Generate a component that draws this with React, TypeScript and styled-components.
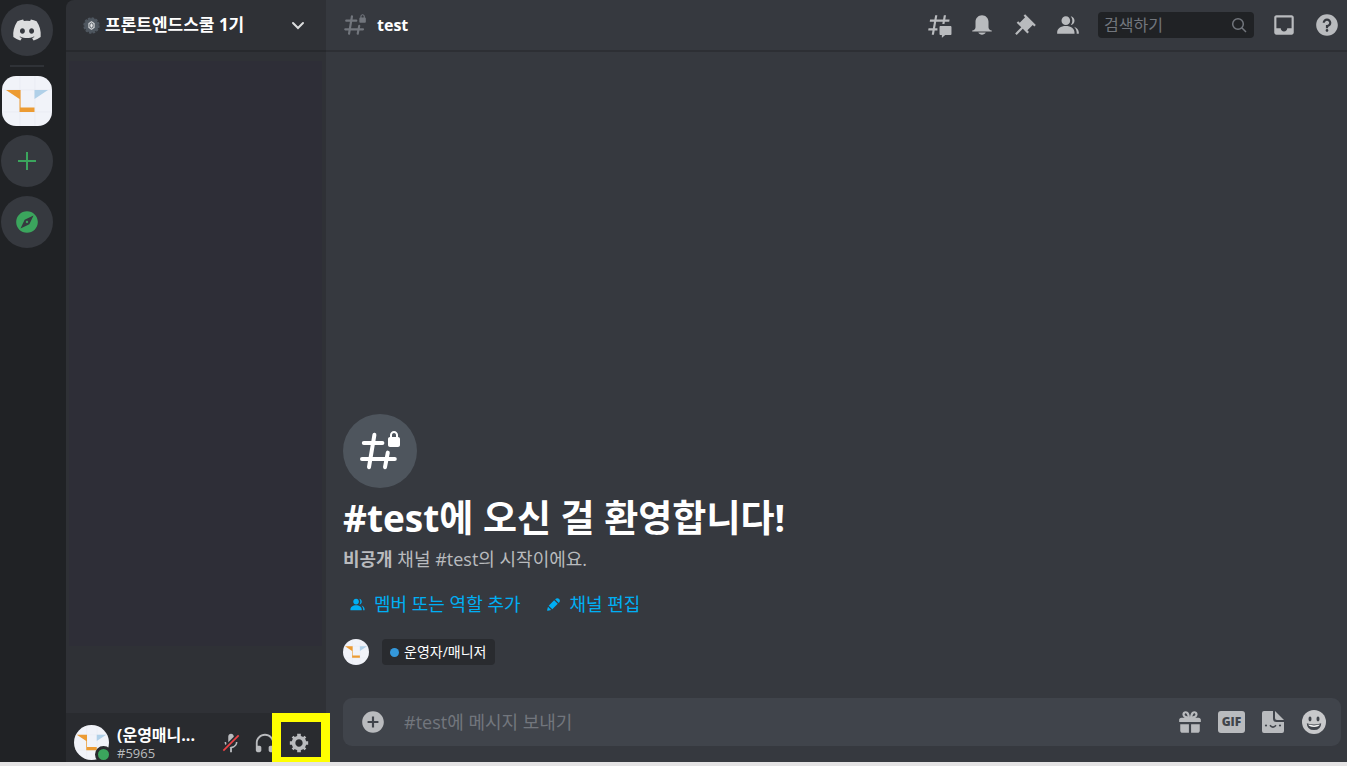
import React from "react";
import styled, { createGlobalStyle } from "styled-components";
import { FaDiscord } from "react-icons/fa6";

const GlobalStyle = createGlobalStyle`
  *, *::before, *::after { box-sizing: border-box; }
  body {
    margin: 0;
    background: #e4e3e4;
    color: #dcddde;
    font-family: "Open Sans", "Noto Sans CJK KR", sans-serif;
  }
  button { padding: 0; border: 0; background: none; color: inherit; font: inherit; cursor: pointer; }
  h1, h2, p { margin: 0; }
  svg { display: block; flex: none; }
`;

const Shell = styled.div`
  display: grid;
  grid-template-columns: 66px 260px minmax(0, 1fr);
  height: calc(100vh - 4px);
  background: #202225;
`;

/* Server rail */
const Rail = styled.nav`
  display: flex;
  flex-direction: column;
  align-items: center;
  gap: 9px;
  width: 53px;
  padding-top: 4px;
`;
const RailButton = styled.button<{ $green?: boolean }>`
  display: grid;
  place-items: center;
  width: 52px;
  height: 52px;
  border-radius: 50%;
  background: #36393f;
  color: ${(p) => (p.$green ? "#3ba55d" : "#dcddde")};
`;
const RailDivider = styled.hr`
  width: 34px;
  height: 2px;
  margin: 0;
  border: 0;
  background: #2f3237;
`;
const ServerButton = styled.button`
  width: 50px;
  height: 50px;
  border-radius: 14px;
  overflow: hidden;
`;

/* Channel sidebar */
const Sidebar = styled.aside`
  display: flex;
  flex-direction: column;
  min-width: 0;
  border-top-left-radius: 8px;
  background: #2f3136;
`;
const ServerHeader = styled.button`
  display: flex;
  align-items: center;
  gap: 5px;
  height: 52px;
  padding: 0 18px 0 17px;
  border-bottom: 2px solid #27292d;
  color: #fff;
  text-align: left;
`;
const ServerName = styled.span`
  flex: 1;
  font-size: 17px;
  font-weight: 700;
  line-height: 20px;
`;
const ChannelArea = styled.div`
  flex: 1;
  margin: 9px 4px 67px 3px;
  background: #2e2e37;
`;
const UserPanel = styled.footer`
  display: flex;
  align-items: center;
  height: 49px;
  padding: 10px 10px 0 8px;
  background: #292b2f;
`;
const AvatarHolder = styled.div`
  position: relative;
  width: 35px;
  height: 35px;
`;
const Avatar = styled.div<{ $size: number }>`
  width: ${(p) => p.$size}px;
  height: ${(p) => p.$size}px;
  border-radius: 50%;
  overflow: hidden;
`;
const Status = styled.span`
  position: absolute;
  right: -3px;
  bottom: -3px;
  width: 17px;
  height: 17px;
  border: 3px solid #292b2f;
  border-radius: 50%;
  background: #3ba55d;
`;
const UserText = styled.div`
  flex: 1;
  min-width: 0;
  padding-left: 8px;
`;
const UserName = styled.div`
  color: #fff;
  font-size: 16px;
  font-weight: 700;
  line-height: 20px;
  white-space: nowrap;
`;
const UserTag = styled.div`
  color: #b9bbbe;
  font-size: 13px;
  line-height: 16px;
`;
const PanelButton = styled.button`
  position: relative;
  display: grid;
  place-items: center;
  width: 34px;
  height: 34px;
  color: #b9bbbe;
`;
const Highlight = styled.span`
  position: absolute;
  top: -13px;
  left: -10px;
  width: 58px;
  height: 53px;
  border: 9px solid #ff0;
  z-index: 2;
  pointer-events: none;
`;

/* Chat column */
const Main = styled.main`
  display: flex;
  flex-direction: column;
  min-width: 0;
  background: #36393f;
`;
const TopBar = styled.header`
  display: flex;
  align-items: center;
  gap: 17px;
  height: 52px;
  padding: 0 7px 0 16px;
  border-bottom: 2px solid #2d2f34;
  color: #b9bbbe;
`;
const ChannelTitle = styled.h1`
  display: flex;
  flex: 1;
  align-items: center;
  gap: 9px;
  color: #fff;
  font-size: 16px;
  font-weight: 700;
  line-height: 20px;
  svg { color: #72767d; }
`;
const IconButton = styled.button`
  display: grid;
  place-items: center;
  width: 26px;
  height: 26px;
  color: #b9bbbe;
`;
const SearchBox = styled.label`
  display: flex;
  align-items: center;
  width: 156px;
  height: 26px;
  padding: 0 6px;
  border-radius: 4px;
  background: #202225;
  color: #72767d;
`;
const SearchInput = styled.input`
  flex: 1;
  min-width: 0;
  padding: 0;
  border: 0;
  outline: 0;
  background: none;
  color: #dcddde;
  font: 16px/20px "Open Sans", "Noto Sans CJK KR", sans-serif;
  &::placeholder { color: #72767d; opacity: 1; }
`;
const Welcome = styled.section`
  display: flex;
  flex: 1;
  flex-direction: column;
  align-items: flex-start;
  justify-content: flex-end;
  padding: 0 17px 33px;
`;
const ChannelBadge = styled.div`
  display: grid;
  place-items: center;
  width: 74px;
  height: 74px;
  border-radius: 50%;
  background: #4e555d;
  color: #fff;
`;
const WelcomeTitle = styled.h2`
  margin-top: 8px;
  color: #fff;
  font-size: 37px;
  font-weight: 700;
  line-height: 44px;
`;
const WelcomeText = styled.p`
  margin-top: 8px;
  color: #b9bbbe;
  font-size: 18px;
  line-height: 22px;
`;
const Actions = styled.div`
  display: flex;
  gap: 24px;
  margin: 23px 0 24px 6px;
`;
const ActionButton = styled.button`
  display: flex;
  align-items: center;
  gap: 8px;
  color: #00aff4;
  font-size: 18px;
  line-height: 22px;
`;
const RoleRow = styled.div`
  display: flex;
  align-items: center;
  gap: 13px;
`;
const Role = styled.span`
  display: flex;
  align-items: center;
  gap: 5px;
  height: 26px;
  padding: 0 9px 0 8px;
  border-radius: 4px;
  background: #292b2f;
  color: #fff;
  font-size: 14px;
  line-height: 20px;
  &::before {
    content: "";
    width: 9px;
    height: 9px;
    border-radius: 50%;
    background: #3498db;
  }
`;
const Composer = styled.form`
  display: flex;
  align-items: center;
  gap: 15px;
  height: 48px;
  margin: 0 6px 16px 17px;
  padding: 0 14px 0 17px;
  border-radius: 9px;
  background: #40444b;
`;
const MessageInput = styled.input`
  flex: 1;
  min-width: 0;
  padding: 0 0 0 3px;
  border: 0;
  outline: 0;
  background: none;
  color: #dcddde;
  font: 18px/22px "Open Sans", "Noto Sans CJK KR", sans-serif;
  &::placeholder { color: #72767d; opacity: 1; }
`;
const GifButton = styled.button`
  width: 27px;
  height: 22px;
  border-radius: 3px;
  background: #b9bbbe;
  color: #40444b;
  font-size: 12px;
  font-weight: 800;
  line-height: 22px;
`;

function Icon({ size, children }: { size: number; children: React.ReactNode }) {
  return (
    <svg width={size} height={size} viewBox="0 0 24 24" fill="currentColor" fillRule="evenodd" aria-hidden="true">
      {children}
    </svg>
  );
}

function LockedHash({ size }: { size: number }) {
  return (
    <Icon size={size}>
      <path
        d="M9.2 3.9 6.5 20.1M3.9 8H13.2M3 16H19.4M15.9 12.8 14.5 20.1"
        fill="none"
        stroke="currentColor"
        strokeWidth="2"
        strokeLinecap="round"
      />
      <path d="M21.025 5V4C21.025 2.88 20.05 2 19 2C17.95 2 17 2.88 17 4V5C16.448 5 16 5.448 16 6V9C16 9.552 16.448 10 17 10H21C21.552 10 22 9.552 22 9V5.975C22 5.437 21.564 5 21.025 5ZM20 5H18V4C18 3.429 18.467 3 19 3C19.533 3 20 3.429 20 4V5Z" />
    </Icon>
  );
}

function People({ size }: { size: number }) {
  return (
    <Icon size={size}>
      <path d="M14 8.006C14 10.211 12.206 12.006 10 12.006C7.795 12.006 6 10.211 6 8.006C6 5.801 7.794 4.006 10 4.006C12.206 4.006 14 5.801 14 8.006ZM2 19.006C2 15.473 5.29 13.006 10 13.006C14.711 13.006 18 15.473 18 19.006V20.006H2V19.006Z" />
      <path d="M20 20.006H22V19.006C22 16.443 20.27 14.442 17.521 13.535C19.062 14.913 20 16.806 20 19.006V20.006Z" />
      <path d="M14.883 11.908C16.666 11.504 18 9.908 18 8.006C18 5.969 16.469 4.282 14.497 4.037C15.432 5.095 16 6.485 16 8.006C16 9.449 15.489 10.774 14.638 11.81C14.72 11.842 14.802 11.874 14.883 11.908Z" />
    </Icon>
  );
}

function SchoolLogo({ size }: { size: number }) {
  return (
    <svg width={size} height={size} viewBox="0 0 50 50" aria-hidden="true">
      <rect width="50" height="50" fill="#f1f3f9" />
      <path d="M18 0V50M33 0V50M0 14H50M0 36H50" stroke="#e6e9f0" strokeWidth="0.6" />
      <path d="M4 14H18.6V31.5H32.5V36H17.5V23Z" fill="#ec9b33" />
      <path d="M32.5 14H46L32.5 23Z" fill="#b0d0e8" />
    </svg>
  );
}

export default function App() {
  return (
    <>
      <GlobalStyle />
      <Shell>
        <Rail aria-label="서버">
          <RailButton aria-label="홈">
            <FaDiscord size={30} />
          </RailButton>
          <RailDivider />
          <ServerButton aria-label="프론트엔드스쿨 1기">
            <SchoolLogo size={50} />
          </ServerButton>
          <RailButton $green aria-label="서버 추가하기">
            <svg width="18" height="18" viewBox="0 0 18 18" aria-hidden="true">
              <path d="M9 0V18M0 9H18" stroke="currentColor" strokeWidth="2" />
            </svg>
          </RailButton>
          <RailButton $green aria-label="서버 찾기">
            <Icon size={26}>
              <path d="M12 10.9C11.39 10.9 10.9 11.39 10.9 12C10.9 12.61 11.39 13.1 12 13.1C12.61 13.1 13.1 12.61 13.1 12C13.1 11.39 12.61 10.9 12 10.9ZM12 2C6.48 2 2 6.48 2 12C2 17.52 6.48 22 12 22C17.52 22 22 17.52 22 12C22 6.48 17.52 2 12 2ZM14.19 14.19L6 18L9.81 9.81L18 6L14.19 14.19Z" />
            </Icon>
          </RailButton>
        </Rail>

        <Sidebar>
          <ServerHeader>
            <svg width="17" height="17" viewBox="0 0 17 17" aria-hidden="true">
              <circle cx="8.5" cy="8.5" r="7.2" fill="#4f5760" />
              <circle cx="8.5" cy="8.5" r="7.4" fill="none" stroke="#4f5760" strokeWidth="1.6" strokeDasharray="2.6 1.27" />
              <path d="M8.5 4 11.7 6.2V10.8L8.5 13 5.3 10.8V6.2Z" fill="#c9cccf" />
              <ellipse cx="8.5" cy="8.5" rx="1.7" ry="2.5" fill="#e4e5e7" stroke="#4f5760" strokeWidth="0.9" />
            </svg>
            <ServerName>프론트엔드스쿨 1기</ServerName>
            <svg width="20" height="20" viewBox="0 0 20 20" aria-hidden="true">
              <path d="M5 8 10 13 15 8" fill="none" stroke="#dcddde" strokeWidth="2" strokeLinecap="round" />
            </svg>
          </ServerHeader>
          <ChannelArea />
          <UserPanel>
            <AvatarHolder>
              <Avatar $size={35}>
                <SchoolLogo size={35} />
              </Avatar>
              <Status />
            </AvatarHolder>
            <UserText>
              <UserName>(운영매니...</UserName>
              <UserTag>#5965</UserTag>
            </UserText>
            <PanelButton aria-label="음소거 해제">
              <Icon size={22}>
                <path d="M6.7 11H5C5 12.19 5.34 13.3 5.9 14.28L7.13 13.05C6.86 12.43 6.7 11.74 6.7 11Z" />
                <path d="M9.01 11.085L9.02 11.17L15 5.18V5C15 3.34 13.66 2 12 2C10.34 2 9 3.34 9 5V11Z" />
                <path d="M11.724 16.093L10.253 17.569C10.498 17.633 10.747 17.684 11 17.72V22H13V17.72C16.28 17.23 19 14.41 19 11H17.3C17.3 14 14.76 16.1 12 16.1Z" />
                <path d="M21 4.27L19.73 3L3 19.73L4.27 21Z" fill="#ed4245" />
              </Icon>
            </PanelButton>
            <PanelButton aria-label="헤드셋 음소거">
              <Icon size={22}>
                <path d="M12 2.003C6.486 2.003 2 6.488 2 12.003V20.003C2 21.107 2.895 22.003 4 22.003H6C7.104 22.003 8 21.107 8 20.003V17.003C8 15.899 7.104 15.003 6 15.003H4V12.003C4 7.591 7.589 4.003 12 4.003C16.411 4.003 20 7.591 20 12.003V15.003H18C16.896 15.003 16 15.899 16 17.003V20.003C16 21.107 16.896 22.003 18 22.003H20C21.104 22.003 22 21.107 22 20.003V12.003C22 6.488 17.514 2.003 12 2.003Z" />
              </Icon>
            </PanelButton>
            <PanelButton aria-label="사용자 설정">
              <Icon size={22}>
                <path d="M19.738 10H22V14H19.739C19.498 14.931 19.1 15.798 18.565 16.564L20 18L18 20L16.565 18.564C15.797 19.099 14.932 19.498 14 19.738V22H10V19.738C9.069 19.498 8.203 19.099 7.436 18.564L6 20L4 18L5.436 16.564C4.901 15.799 4.502 14.932 4.262 14H2V10H4.262C4.502 9.068 4.9 8.202 5.436 7.436L4 6L6 4L7.436 5.436C8.202 4.9 9.068 4.502 10 4.262V2H14V4.261C14.932 4.502 15.797 4.9 16.565 5.435L18 3.999L20 5.999L18.564 7.436C19.099 8.202 19.498 9.069 19.738 10ZM12 16C14.209 16 16 14.209 16 12C16 9.791 14.209 8 12 8C9.791 8 8 9.791 8 12C8 14.209 9.791 16 12 16Z" />
              </Icon>
              <Highlight />
            </PanelButton>
          </UserPanel>
        </Sidebar>

        <Main>
          <TopBar>
            <ChannelTitle>
              <LockedHash size={26} />
              test
            </ChannelTitle>
            <IconButton aria-label="스레드">
              <Icon size={26}>
                <path d="M5.433 21C5.358 21 5.302 20.933 5.315 20.859L6 17H2.143C2.068 17 2.012 16.933 2.025 16.859L2.333 15.099C2.343 15.042 2.392 15 2.451 15H6.35L7.41 9H3.553C3.478 9 3.422 8.933 3.435 8.859L3.743 7.099C3.753 7.042 3.802 7 3.861 7H7.76L8.452 3.099C8.463 3.042 8.512 3 8.57 3H10.327C10.401 3 10.458 3.067 10.445 3.141L9.76 7H15.76L16.452 3.099C16.463 3.042 16.512 3 16.571 3H18.327C18.401 3 18.458 3.067 18.445 3.141L17.76 7H21.617C21.692 7 21.748 7.067 21.735 7.141L21.427 8.901C21.417 8.958 21.367 9 21.309 9H17.41L17.05 11.04H15.05L15.41 9H9.41L8.35 15H10.56V17H8L7.307 20.901C7.297 20.958 7.248 21 7.189 21H5.433Z" />
                <path d="M13.44 12.96C12.91 12.96 12.48 13.39 12.48 13.92V20.221C12.48 20.752 12.91 21.181 13.44 21.181H14.4C14.533 21.181 14.64 21.289 14.64 21.421V23.46C14.64 23.668 14.887 23.777 15.041 23.638L17.486 21.429C17.662 21.27 17.892 21.181 18.129 21.181H22.56C23.09 21.181 23.52 20.752 23.52 20.221V13.92C23.52 13.39 23.09 12.96 22.56 12.96H13.44Z" />
              </Icon>
            </IconButton>
            <IconButton aria-label="알림 설정">
              <Icon size={26}>
                <path d="M18 9V14C18 15.657 19.344 17 21 17V18H3V17C4.656 17 6 15.657 6 14V9C6 5.686 8.686 3 12 3C15.314 3 18 5.686 18 9ZM12 21C10.524 21 9.248 20.19 8.555 19H15.445C14.752 20.19 13.476 21 12 21Z" />
              </Icon>
            </IconButton>
            <IconButton aria-label="고정된 메시지">
              <Icon size={26}>
                <path d="M22 12L12.101 2.101L10.686 3.514L12.101 4.929L7.151 9.878L5.736 8.465L4.322 9.88L8.565 14.122L2.908 19.778L4.322 21.192L9.979 15.536L14.222 19.778L15.636 18.364L14.222 16.95L19.171 12L20.586 13.414L22 12Z" />
              </Icon>
            </IconButton>
            <IconButton aria-label="멤버 목록">
              <People size={26} />
            </IconButton>
            <SearchBox>
              <SearchInput type="text" placeholder="검색하기" aria-label="검색하기" />
              <svg width="18" height="18" viewBox="0 0 18 18" fill="none" stroke="currentColor" strokeWidth="1.5" aria-hidden="true">
                <circle cx="8" cy="8" r="5.3" />
                <path d="M11.8 11.8 16 16" />
              </svg>
            </SearchBox>
            <IconButton aria-label="받은 편지함">
              <Icon size={26}>
                <path d="M19 3H4.99C3.88 3 3.01 3.89 3.01 5L3 19C3 20.1 3.88 21 4.99 21H19C20.1 21 21 20.1 21 19V5C21 3.89 20.1 3 19 3ZM19 15H15C15 16.66 13.65 18 12 18C10.35 18 9 16.66 9 15H4.99V5H19V15Z" />
              </Icon>
            </IconButton>
            <IconButton aria-label="도움말">
              <Icon size={26}>
                <path d="M12 2C6.486 2 2 6.487 2 12C2 17.515 6.486 22 12 22C17.514 22 22 17.515 22 12C22 6.487 17.514 2 12 2ZM12 18.25C11.31 18.25 10.75 17.691 10.75 17C10.75 16.31 11.31 15.75 12 15.75C12.69 15.75 13.25 16.31 13.25 17C13.25 17.691 12.69 18.25 12 18.25ZM13 13.875V15H11V12H12C13.104 12 14 11.103 14 10C14 8.896 13.104 8 12 8C10.896 8 10 8.896 10 10H8C8 7.795 9.795 6 12 6C14.205 6 16 7.795 16 10C16 11.861 14.723 13.429 13 13.875Z" />
              </Icon>
            </IconButton>
          </TopBar>

          <Welcome>
            <ChannelBadge>
              <LockedHash size={48} />
            </ChannelBadge>
            <WelcomeTitle>#test에 오신 걸 환영합니다!</WelcomeTitle>
            <WelcomeText>
              <strong>비공개</strong> 채널 #test의 시작이에요.
            </WelcomeText>
            <Actions>
              <ActionButton>
                <People size={17} />
                멤버 또는 역할 추가
              </ActionButton>
              <ActionButton>
                <Icon size={17}>
                  <path d="M19.293 9.83L19.941 9.183C21.353 7.771 21.353 5.472 19.941 4.059C18.529 2.647 16.229 2.647 14.817 4.059L14.17 4.707L19.293 9.83ZM12.896 5.977L5.185 13.691L10.309 18.813L18.02 11.099L12.896 5.977ZM4.119 20.97L8.759 19.811L4.187 15.239L3.027 19.88C2.95 20.186 3.04 20.511 3.263 20.734C3.487 20.957 3.812 21.046 4.119 20.97Z" />
                </Icon>
                채널 편집
              </ActionButton>
            </Actions>
            <RoleRow>
              <Avatar $size={26}>
                <SchoolLogo size={26} />
              </Avatar>
              <Role>운영자/매니저</Role>
            </RoleRow>
          </Welcome>

          <Composer>
            <IconButton type="button" aria-label="파일 첨부">
              <Icon size={26}>
                <path d="M12 2C6.486 2 2 6.487 2 12C2 17.515 6.486 22 12 22C17.514 22 22 17.515 22 12C22 6.487 17.514 2 12 2ZM17 13H13V17H11V13H7V11H11V7H13V11H17V13Z" />
              </Icon>
            </IconButton>
            <MessageInput type="text" placeholder="#test에 메시지 보내기" aria-label="메시지" />
            <IconButton type="button" aria-label="선물 보내기">
              <Icon size={26}>
                <path d="M16.886 7.999H20C21.104 7.999 22 8.896 22 9.999V11.999H2V9.999C2 8.896 2.897 7.999 4 7.999H7.114C6.663 7.764 6.236 7.477 5.879 7.121C4.709 5.951 4.709 4.048 5.879 2.879C7.012 1.746 8.986 1.746 10.121 2.877C11.758 4.514 11.979 7.595 11.998 7.941H12.002C12.022 7.594 12.242 4.514 13.879 2.877C15.014 1.745 16.986 1.746 18.121 2.877C19.29 4.049 19.29 5.952 18.121 7.121C17.764 7.477 17.337 7.764 16.886 7.999ZM7.293 5.707C6.903 5.316 6.903 4.682 7.293 4.292C7.481 4.103 7.732 4 8 4C8.268 4 8.519 4.103 8.707 4.292C9.297 4.882 9.641 5.94 9.825 6.822C8.945 6.639 7.879 6.293 7.293 5.707ZM14.174 6.824C14.359 5.941 14.702 4.883 15.293 4.293C15.481 4.103 15.732 4 16 4C16.268 4 16.519 4.103 16.706 4.291C17.096 4.682 17.097 5.316 16.707 5.707C16.116 6.298 15.057 6.642 14.174 6.824ZM3 13.999V19.999C3 21.102 3.897 21.999 5 21.999H11V13.999H3ZM13 13.999V21.999H19C20.104 21.999 21 21.102 21 19.999V13.999H13Z" />
              </Icon>
            </IconButton>
            <GifButton type="button">GIF</GifButton>
            <IconButton type="button" aria-label="스티커">
              <svg width="22" height="22" viewBox="0 0 22 22" aria-hidden="true">
                <path d="M2 0H11V7.5A3.5 3.5 0 0 0 14.5 11H22V20A2 2 0 0 1 20 22H2A2 2 0 0 1 0 20V2A2 2 0 0 1 2 0Z" fill="currentColor" />
                <path d="M13 0 22 9H15A2 2 0 0 1 13 7Z" fill="currentColor" />
                <path d="M8 14.3Q11 18 14 14.3" fill="none" stroke="#40444b" strokeWidth="1.6" />
                <circle cx="4" cy="14.5" r="1.1" fill="#40444b" />
                <circle cx="18" cy="14.5" r="1.1" fill="#40444b" />
              </svg>
            </IconButton>
            <IconButton type="button" aria-label="이모지">
              <svg width="24" height="24" viewBox="0 0 24 24" aria-hidden="true">
                <circle cx="12" cy="12" r="12" fill="#c8c9cb" />
                <ellipse cx="8" cy="9" rx="1.5" ry="2.4" fill="#40444b" />
                <ellipse cx="16" cy="9" rx="1.5" ry="2.4" fill="#40444b" />
                <path d="M4.8 13.2Q12 15.6 19.2 13.2Q19 20 12 20Q5 20 4.8 13.2Z" fill="#40444b" />
                <path d="M6.2 14.6Q12 16.2 17.8 14.6Q17.2 17 12 17Q6.8 17 6.2 14.6Z" fill="#f4f4f4" />
              </svg>
            </IconButton>
          </Composer>
        </Main>
      </Shell>
    </>
  );
}
